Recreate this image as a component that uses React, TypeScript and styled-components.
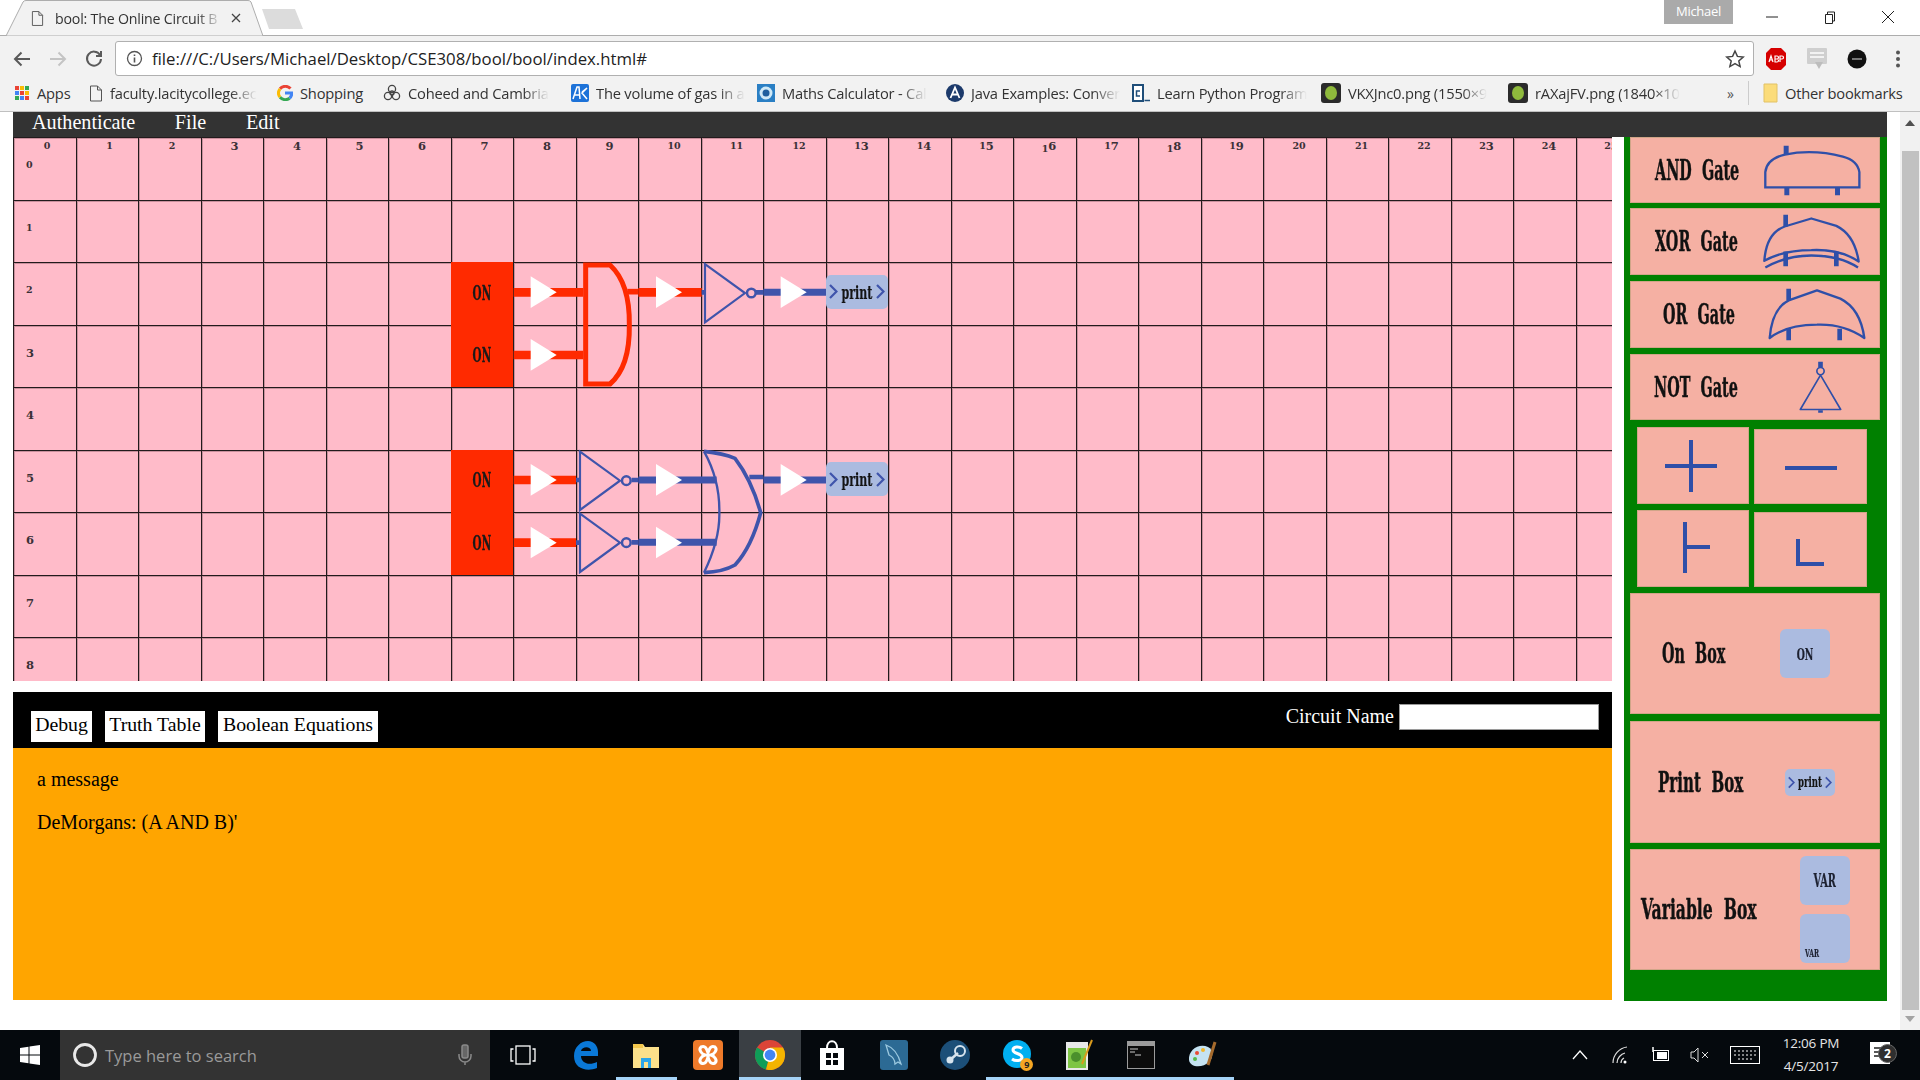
import React from 'react';
import styled, { createGlobalStyle } from 'styled-components';

const Global = createGlobalStyle`
  html, body { margin: 0; padding: 0; background: #fff; overflow: hidden; }
  #root { width: 1920px; height: 1080px; }
`;

const UI = `"Open Sans", "Noto Sans", sans-serif`;
const SERIF = `"Liberation Serif", serif`;
const SLAB = `"DejaVu Serif Condensed", "DejaVu Serif", serif`;
const PEACH = '#f5b0a3';
const BLUE = '#2f4fa8';
const WIRE_BLUE = '#3f54ab';
const RED = '#ff2a00';
const TAG = '#abbbe0';

const Screen = styled.div`
  width: 1920px; height: 1080px; display: flex; flex-direction: column; overflow: hidden;
`;

/* ---------- browser chrome ---------- */
const TabStrip = styled.div`
  height: 35px; background: #fff; border-bottom: 1px solid #adadad; display: flex; flex: none; position: relative;
`;
const Tab = styled.div`
  position: relative; width: 262px; height: 36px; margin-left: 5px; display: flex; align-items: center;
  padding: 0 0 0 26px; box-sizing: border-box; gap: 11px; z-index: 1;
`;
const TabShape = styled.svg`position: absolute; left: 0; top: 0; z-index: -1;`;
const TabTitle = styled.span`
  font: 14.2px ${UI}; color: #333; width: 167px; white-space: nowrap; letter-spacing: -0.2px; margin-right: -2px;
  mask-image: linear-gradient(to right, #000 85%, transparent);
`;
const NewTab = styled.svg`margin-top: 9px; margin-left: -6px; flex: none;`;
const UserBadge = styled.div`
  position: absolute; left: 1664px; top: 0; width: 69px; height: 24px; background: #aaa; color: #fff;
  font: 13px ${UI}; text-align: center; line-height: 22px; letter-spacing: -0.3px;
`;
const WindowButtons = styled.div`
  position: absolute; left: 1743px; top: 0; display: flex;
`;
const WindowButton = styled.div`
  width: 58px; height: 34px; display: flex; align-items: center; justify-content: center;
`;

const Toolbar = styled.div`
  height: 42px; background: #f2f2f2; display: flex; align-items: flex-start; padding-left: 4px; flex: none; box-sizing: border-box;
`;
const NavButton = styled.div`
  width: 36px; height: 36px; margin-top: 5px; display: flex; align-items: center; justify-content: center; flex: none;
`;
const Omnibox = styled.div`
  width: 1639px; height: 35px; margin: 5px 2px 0 3px; background: #fff; border: 1px solid #b0b0b0; border-radius: 3px; box-sizing: border-box;
  display: flex; align-items: center; padding: 0 8px 0 10px; flex: none;
`;
const Url = styled.span`
  font: 16.75px ${UI}; color: #222; margin-left: 9px; flex: 1; white-space: nowrap;
`;
const ExtensionSlot = styled.div`
  width: 40.6px; height: 36px; margin-top: 5px; display: flex; align-items: center; justify-content: center; flex: none;
`;

const Bookmarks = styled.div`
  height: 34px; background: #f2f2f2; border-bottom: 1px solid #c0c0c0; display: flex; align-items: center; box-sizing: border-box; flex: none; padding: 0 0 3px 14px;
`;
const Bookmark = styled.div<{ $w: number }>`
  width: ${p => p.$w}px; display: flex; align-items: center; gap: 7px; flex: none;
`;
const BookmarkIcon = styled.svg`flex: none;`;
const BookmarkText = styled.span<{ $fade?: boolean }>`
  font: 14.7px ${UI}; color: #333; white-space: nowrap; letter-spacing: -0.2px;
  ${p => p.$fade ? 'mask-image: linear-gradient(to right, #000 82%, transparent);' : ''}
`;
const Overflow = styled.span`font: 14px ${UI}; color: #555; width: 19px; text-align: center; flex: none;`;
const Divider = styled.div`width: 1px; height: 24px; background: #ccc; margin: 0 14px 0 8px; flex: none;`;

/* ---------- viewport & page ---------- */
const Viewport = styled.div`flex: 1; display: flex; min-height: 0;`;
const Page = styled.div`width: 1900px; padding-left: 13px; box-sizing: border-box; flex: none;`;
const MenuBar = styled.nav`
  width: 1874px; height: 25px; background: #333; display: flex; align-items: center; padding-left: 19px; box-sizing: border-box; gap: 39.700px;
`;
const MenuItem = styled.span`font: 20.2px/23px ${SERIF}; color: #fff; margin-top: -5px;`;
const Columns = styled.div`display: flex; gap: 12px; align-items: flex-start;`;
const Main = styled.div`width: 1599px; flex: none;`;

const Board = styled.div`
  position: relative; width: 1599px; height: 544px; overflow: hidden; background: #ffbbc9;
  display: grid; grid-template-columns: repeat(26, 62.5px); grid-auto-rows: 62.5px; z-index: 0;
`;
const Cell = styled.div<{ $on?: boolean }>`
  position: relative; display: flex; align-items: center; justify-content: center;
  background: ${p => p.$on ? RED : 'transparent'};
  ${p => p.$on ? '' : 'box-shadow: inset 1px 1px 0 #221a1c, inset 2px 2px 0 rgba(60,30,40,.28);'}
`;
const OnText = styled.span`
  font: bold 21px ${SLAB}; color: #1a1a1a; transform: scale(.55, 1); display: block; margin-top: -2px; -webkit-text-stroke: .3px #1a1a1a;
`;
const Digit = styled.span<{ $d: string }>`
  font-size: ${p => '012'.includes(p.$d) ? 9.5 : 11.5}px;
  vertical-align: ${p => '34579'.includes(p.$d) ? -1 : '68'.includes(p.$d) ? 2 : 0}px;
`;
const Axis = styled.span`
  position: absolute; font: bold 9px/12px "DejaVu Serif", serif; color: #3a3036; white-space: nowrap;
`;
const ColLabel = styled(Axis)<{ $wide: boolean }>`left: 0; width: ${p => p.$wide ? 72 : 68}px; text-align: center; top: 3px;`;
const RowLabel = styled(Axis)`left: 13px; top: 22px;`;
const Overlay = styled.svg`position: absolute; left: 0; top: 0; z-index: 1; pointer-events: none;`;

const PrintShell = styled.div<{ $small?: boolean }>`
  position: relative; z-index: 2; flex: none; background: ${TAG}; border-radius: 5px;
  width: ${p => p.$small ? 50 : 62}px; height: ${p => p.$small ? 27 : 34}px;
  margin-top: ${p => p.$small ? 0 : -3}px;
  display: flex; align-items: center; justify-content: space-between; padding: 0 3px; box-sizing: border-box;
`;
const PrintText = styled.span<{ $small?: boolean }>`
  font: bold ${p => p.$small ? 17 : 22}px/1 ${SLAB}; color: #141414; transform: scale(.56, .85); flex: none; width: 0; display: flex; justify-content: center; -webkit-text-stroke: .2px #141414;
`;

const PrintTag = ({ small }: { small?: boolean }) => {
  const w = small ? 7 : 9;
  const h = small ? 13 : 15;
  const chev = (
    <svg width={w} height={h} viewBox="0 0 9 15" fill="none">
      <path d="M1 1l6.500 6.500L1 14" stroke={WIRE_BLUE} strokeWidth="2.200" />
    </svg>
  );
  return (
    <PrintShell $small={small}>
      {chev}
      <PrintText $small={small}>print</PrintText>
      {chev}
    </PrintShell>
  );
};

const TabBar = styled.div`
  margin-top: 11px; height: 56px; background: #000; display: flex; align-items: flex-start; padding: 19px 13px 0 18px; box-sizing: border-box;
`;
const TabButton = styled.button<{ $w: number }>`
  width: ${p => p.$w}px; height: 31px; margin-right: 13px; border: 0; background: #fff; font: 19.8px/26px ${SERIF}; color: #000; padding: 0 0 7px; white-space: nowrap;
  &:last-of-type { margin-right: 0; }
`;
const NameField = styled.label`
  margin-left: auto; margin-top: -7px; display: flex; align-items: center; gap: 5px; color: #fff; font: 20px ${SERIF};
`;
const NameInput = styled.input`
  width: 200px; height: 26px; box-sizing: border-box; border: 1px solid #9a9a9a; background: #fff; margin: 0 0 -1px; padding: 0;
`;
const Output = styled.div`
  height: 252px; background: #ffa500; padding: 20px 20px 0 24px; box-sizing: border-box; font: 20px/22px ${SERIF}; color: #000;
`;
const OutputLine = styled.p`margin: 0 0 21px;`;

/* ---------- sidebar ---------- */
const Sidebar = styled.aside`
  width: 263px; height: 864px; background: #008000; padding: 0 7px 0 6px; box-sizing: border-box; flex: none;
`;
const PaletteItem = styled.div<{ $h: number; $gap?: number }>`
  height: ${p => p.$h}px; margin-bottom: ${p => p.$gap ?? 6}px; background: ${PEACH}; box-shadow: inset 0 0 0 1px #d0a588;
  display: flex; align-items: center; box-sizing: border-box;
`;
const LabelSlot = styled.div<{ $left: number }>`flex: 1; min-width: 0; padding-left: ${p => p.$left}px; height: 100%; display: flex; align-items: center;`;
const PaletteLabel = styled.span<{ $sx?: number }>`
  font: bold 31px/1 ${SLAB}; color: #111; white-space: pre; display: block; word-spacing: 10px; -webkit-text-stroke: .5px #111;
  transform: scale(${p => p.$sx ?? 0.515}, .9); transform-origin: left center;
`;
const GateIcon = styled.svg<{ $right: number }>`flex: none; margin-right: ${p => p.$right}px;`;
const ToolGrid = styled.div`
  display: grid; grid-template-columns: 112px 113px; column-gap: 5px; row-gap: 6px; padding-left: 7px; margin-bottom: 6px;
`;
const ToolButton = styled.div<{ $nudge?: number }>`
  height: ${p => 77 - (p.$nudge ?? 0)}px; margin-top: ${p => p.$nudge ?? 0}px;
  background: ${PEACH}; box-shadow: inset 0 0 0 1px #d0a588; display: flex; align-items: center; justify-content: center;
`;
const ChipStack = styled.div<{ $right: number }>`display: flex; flex-direction: column; gap: 9px; margin-right: ${p => p.$right}px; flex: none;`;
const Chip = styled.div<{ $corner?: boolean }>`
  width: 50px; height: 49px; background: ${TAG}; border-radius: 6px; display: flex; flex: none; position: relative;
  align-items: ${p => p.$corner ? 'flex-end' : 'center'}; justify-content: ${p => p.$corner ? 'flex-start' : 'center'};
`;
const ChipText = styled.span<{ $size: number; $corner?: boolean }>`
  font: bold ${p => p.$size}px/1 ${SLAB}; color: #1c2030; transform: scale(.52, .85); transform-origin: ${p => p.$corner ? 'left bottom' : 'center'};
  -webkit-text-stroke: .25px #1c2030;
  ${p => p.$corner ? 'margin: 0 0 4px 5px;' : ''}
`;

/* ---------- scrollbar ---------- */
const Scrollbar = styled.div`
  width: 20px; flex: none; background: #f1f1f1; display: flex; flex-direction: column; align-items: center; height: 100%;
`;
const ScrollArrow = styled.div`height: 39px; display: flex; align-items: center; justify-content: center; flex: none; padding-bottom: 17px; box-sizing: border-box;`;
const ScrollArrowDown = styled(ScrollArrow)`height: 18px; padding: 0; `;
const ScrollThumb = styled.div`width: 17px; height: 859px; background: #c1c1c1; flex: none;`;

/* ---------- taskbar ---------- */
const Taskbar = styled.footer`
  height: 50px; flex: none; background: #05090d; display: flex; align-items: stretch; color: #fff;
`;
const StartButton = styled.div`width: 60px; display: flex; align-items: center; justify-content: center; flex: none;`;
const SearchBox = styled.div`
  width: 430px; background: #333; display: flex; align-items: center; padding: 0 17px 0 12px; box-sizing: border-box; flex: none;
`;
const SearchText = styled.span`font: 16.5px ${UI}; color: #9a9a9a; margin-left: 7px; flex: 1;`;
const TaskIcons = styled.div`display: flex; padding-left: 2px;`;
const TaskSlot = styled.div<{ $open?: boolean; $active?: boolean }>`
  width: 61.8px; display: flex; align-items: center; justify-content: center; position: relative; flex: none;
  background: ${p => p.$active ? '#3a3f44' : 'transparent'};
  box-shadow: ${p => p.$open ? 'inset 0 -3px 0 #a5d3f7' : 'none'};
`;
const Tray = styled.div`margin-left: auto; display: flex; align-items: center; padding-right: 12px;`;
const TraySlot = styled.div<{ $w: number }>`width: ${p => p.$w}px; display: flex; align-items: center; justify-content: center; flex: none; position: relative;`;
const Clock = styled.div`font: 13.5px/23px ${UI}; color: #e6e6e6; text-align: center; letter-spacing: -0.2px; white-space: nowrap;`;
const NoteBadge = styled.span`
  position: absolute; left: 26px; top: 2px; width: 19px; height: 19px; border-radius: 50%; background: #2f2f2f; border: 1px solid #666;
  box-sizing: border-box; font: bold 12px/17px ${UI}; text-align: center; color: #fff;
`;
const SkypeBadge = styled.span`
  position: absolute; left: 34px; top: 28px; width: 13px; height: 13px; border-radius: 50%; background: #f5a623; color: #222;
  font: bold 9px/13px ${UI}; text-align: center;
`;

/* ---------- icons ---------- */
const FileIcon = () => (
  <BookmarkIcon width="14" height="17" viewBox="0 0 14 17" fill="none">
    <path d="M1.500 1h7l4 4v11h-11z M8.500 1v4h4" stroke="#555" strokeWidth="1" />
  </BookmarkIcon>
);
const AppsIcon = () => {
  const c = ['#ea4335', '#fbbc05', '#34a853', '#4285f4', '#ea4335', '#fbbc05', '#34a853', '#4285f4', '#ea4335'];
  return (
    <BookmarkIcon width="16" height="16" viewBox="0 0 16 16">
      {c.map((f, i) => <rect key={i} x={1 + (i % 3) * 5} y={1 + Math.floor(i / 3) * 5} width="4" height="4" fill={f} />)}
    </BookmarkIcon>
  );
};
const GoogleIcon = () => (
  <BookmarkIcon width="16" height="16" viewBox="0 0 16 16" fill="none" strokeWidth="3">
    <path d="M13.500 3.600A7 7 0 0 0 3 3.800" stroke="#ea4335" />
    <path d="M3 3.800a7 7 0 0 0 0 8.400" stroke="#fbbc05" />
    <path d="M3 12.200a7 7 0 0 0 9.600 1" stroke="#34a853" />
    <path d="M12.600 13.200A7 7 0 0 0 14.800 8H8" stroke="#4285f4" />
  </BookmarkIcon>
);
const KnotIcon = () => (
  <BookmarkIcon width="18" height="18" viewBox="0 0 18 18" fill="none" stroke="#444" strokeWidth="1.300">
    <circle cx="9" cy="5" r="3.600" /><circle cx="5" cy="12" r="3.600" /><circle cx="13" cy="12" r="3.600" /><circle cx="9" cy="9" r="2" />
  </BookmarkIcon>
);
const AeIcon = () => (
  <BookmarkIcon width="18" height="18" viewBox="0 0 18 18">
    <rect width="18" height="18" rx="2" fill="#1d72d8" />
    <path d="M2 15L6 3h2l1 12M3.600 11h5M11 8l5-4-5 5 5 6" fill="none" stroke="#fff" strokeWidth="1.500" />
  </BookmarkIcon>
);
const MathsIcon = () => (
  <BookmarkIcon width="18" height="18" viewBox="0 0 18 18">
    <rect width="18" height="18" fill="#2a7fc4" />
    <circle cx="9" cy="9" r="6.500" fill="#cfe9f7" /><circle cx="9" cy="9" r="3.500" fill="#1f5f9e" />
  </BookmarkIcon>
);
const JavaIcon = () => (
  <BookmarkIcon width="18" height="18" viewBox="0 0 18 18">
    <circle cx="9" cy="9" r="9" fill="#1c3a6b" />
    <path d="M4.500 14L9 3.500 13.500 14M6.500 10.500h5" fill="none" stroke="#fff" strokeWidth="1.800" />
  </BookmarkIcon>
);
const LearnIcon = () => (
  <BookmarkIcon width="18" height="18" viewBox="0 0 18 18" fill="none">
    <rect x="1" y="1" width="10" height="16" fill="#fff" stroke="#1f4e79" strokeWidth="2" />
    <path d="M8 7H4.500v5H8" stroke="#1f4e79" strokeWidth="1.500" />
    <path d="M12.500 16.500H18" stroke="#1f4e79" strokeWidth="1.500" />
  </BookmarkIcon>
);
const GreenIcon = () => (
  <BookmarkIcon width="20" height="20" viewBox="0 0 20 20">
    <rect width="20" height="20" rx="3" fill="#2b2b2b" />
    <ellipse cx="10" cy="10" rx="6" ry="7" fill="#8fba3c" />
  </BookmarkIcon>
);
const FolderIcon = () => (
  <BookmarkIcon width="15" height="20" viewBox="0 0 15 20">
    <path d="M1 1h13v18H1z" fill="#fbdc7a" stroke="#e2c266" />
  </BookmarkIcon>
);

const bookmarks: { w: number; text: string; icon: React.ReactNode; fade?: boolean }[] = [
  { w: 75, text: 'Apps', icon: <AppsIcon /> },
  { w: 188, text: 'faculty.lacitycollege.ec', icon: <FileIcon />, fade: true },
  { w: 106, text: 'Shopping', icon: <GoogleIcon /> },
  { w: 188, text: 'Coheed and Cambria', icon: <KnotIcon />, fade: true },
  { w: 186, text: 'The volume of gas in a', icon: <AeIcon />, fade: true },
  { w: 189, text: 'Maths Calculator - Cal', icon: <MathsIcon />, fade: true },
  { w: 186, text: 'Java Examples: Conver', icon: <JavaIcon />, fade: true },
  { w: 189, text: 'Learn Python Program', icon: <LearnIcon />, fade: true },
  { w: 187, text: 'VKXJnc0.png (1550×9', icon: <GreenIcon />, fade: true },
  { w: 213, text: 'rAXajFV.png (1840×10', icon: <GreenIcon />, fade: true },
];

const ChromeLogo = () => (
  <svg width="30" height="30" viewBox="0 0 30 30">
    <circle cx="15" cy="15" r="15" fill="#db4437" />
    <path d="M15 15L2 7.500A15 15 0 0 0 11 29.500z" fill="#0f9d58" />
    <path d="M15 15l-4 14.500A15 15 0 0 0 28 7.500H15z" fill="#f4b400" />
    <circle cx="15" cy="15" r="7" fill="#fff" /><circle cx="15" cy="15" r="5.400" fill="#4285f4" />
  </svg>
);
const taskIcons: { key: string; node: React.ReactNode; open?: boolean; active?: boolean }[] = [
  { key: 'view', node: (
    <svg width="26" height="26" viewBox="0 0 26 26" fill="none" stroke="#fff" strokeWidth="1.300">
      <rect x="6" y="4" width="14" height="18" /><path d="M3.500 7H1v12h2.500M22.500 7H25v12h-2.500" />
    </svg>) },
  { key: 'edge', node: (
    <svg width="28" height="30" viewBox="0 0 28 30" fill="none">
      <path d="M3 16C3 7 10 1 17 1c6 0 10 5 10 11v4H10c0 7 8 10 16 6v6c-10 4-23 1-23-12zM10 11h10c0-5-9-5-10 0z" fill="#0a78d7" />
    </svg>) },
  { key: 'files', open: true, node: (
    <svg width="28" height="28" viewBox="0 0 28 28">
      <path d="M1 3h10l2 3h14v21H1z" fill="#fbe08a" /><path d="M1 3h10v4H1z" fill="#f3c74c" />
      <path d="M9 27v-10h10v10h-3v-6h-4v6z" fill="#2ba6e8" /><path d="M12 21h4v6h-4z" fill="#fbe08a" />
    </svg>) },
  { key: 'xampp', node: (
    <svg width="30" height="30" viewBox="0 0 30 30" fill="none">
      <rect width="30" height="30" rx="4" fill="#ee7a2a" />
      <path d="M8 7c5-2 6 3 7 6 1-3 2-8 7-6 3 3-1 7-4 8 3 1 7 5 4 8-5 2-6-3-7-6-1 3-2 8-7 6-3-3 1-7 4-8-3-1-7-5-4-8z" stroke="#fff" strokeWidth="3" />
    </svg>) },
  { key: 'chrome', open: true, active: true, node: <ChromeLogo /> },
  { key: 'store', node: (
    <svg width="28" height="32" viewBox="0 0 28 32">
      <path d="M2 9h24v22H2z" fill="#fff" /><path d="M9 9c0-9 10-9 10 0" stroke="#fff" strokeWidth="2" fill="none" />
      <path d="M8 14h5v5H8zM15 14h5v5h-5zM8 21h5v5H8zM15 21h5v5h-5z" fill="#05090d" />
    </svg>) },
  { key: 'mysql', node: (
    <svg width="28" height="30" viewBox="0 0 28 30">
      <rect width="28" height="30" rx="3" fill="#2c6a94" />
      <path d="M6 5c6 2 12 8 15 19l-3-2-3 2c0-5-4-8-6-9z" fill="none" stroke="#9cc9e0" strokeWidth="1.300" />
    </svg>) },
  { key: 'steam', node: (
    <svg width="30" height="30" viewBox="0 0 30 30">
      <circle cx="15" cy="15" r="15" fill="#1c4f78" />
      <circle cx="20" cy="11" r="5" fill="none" stroke="#d7e4ee" strokeWidth="2" /><circle cx="10" cy="20" r="3.500" fill="#d7e4ee" />
      <path d="M10 20l8-7" stroke="#d7e4ee" strokeWidth="2.500" />
    </svg>) },
  { key: 'skype', open: true, node: (
    <>
      <svg width="30" height="32" viewBox="0 0 30 32">
        <circle cx="15" cy="15" r="14" fill="#00aff0" />
        <path d="M20 9.500c-3-2.500-9-2-9 1.500 0 4 9 3 9 7.500 0 3.500-6.500 4-10 1.500" fill="none" stroke="#fff" strokeWidth="3" />
      </svg>
      <SkypeBadge>9</SkypeBadge>
    </>) },
  { key: 'notepad', open: true, node: (
    <svg width="30" height="32" viewBox="0 0 30 32">
      <path d="M2 3h22v28H2z" fill="#e8e8e8" /><path d="M4 9h18v20H4z" fill="#7ec544" />
      <path d="M18 25L28 1" stroke="#d99a1c" strokeWidth="2" /><circle cx="12" cy="18" r="5" fill="#4b8f2c" />
    </svg>) },
  { key: 'cmd', open: true, node: (
    <svg width="28" height="28" viewBox="0 0 28 28">
      <rect width="28" height="28" fill="#9b9b9b" /><rect x="1" y="5" width="26" height="22" fill="#0c0c0c" />
      <path d="M3 8h8M3 11h5M8 14h6" stroke="#ccc" strokeWidth="1" />
    </svg>) },
  { key: 'paint', open: true, node: (
    <svg width="30" height="32" viewBox="0 0 30 32">
      <path d="M1 21C0 11 11 4 20 8c6 3 5 11 1 15-6 6-19 6-20-2z" fill="#c5e3f2" />
      <circle cx="9" cy="14" r="2" fill="#e94b35" /><circle cx="15" cy="11" r="2" fill="#f3b82f" /><circle cx="7" cy="20" r="2" fill="#57b947" />
      <path d="M20 26L27 3" stroke="#a56a2c" strokeWidth="3" />
    </svg>) },
];

/* ---------- gates in the palette (drawn in 3x coordinates) ---------- */
const PaletteAnd = () => (
  <GateIcon $right={17} width="100" height="53" viewBox="460 40 300 160" fill="none" stroke={BLUE}>
    <path d="M466 171H750V125Q745 90 700 78Q610 55 525 72Q470 85 466 125Z" strokeWidth="7" />
    <path d="M529 45V70M531 172V195M684 172V195" strokeWidth="15" />
  </GateIcon>
);
const PaletteXor = () => (
  <GateIcon $right={17} width="100" height="57" viewBox="460 245 300 170" fill="none" stroke={BLUE}>
    <path d="M464 388Q470 305 525 285L605 261L680 283Q735 310 747 390Q690 352 605 356Q520 356 464 388Z" strokeWidth="7" strokeLinejoin="round" />
    <path d="M467 408Q530 372 605 372Q690 372 745 408" strokeWidth="7" />
    <path d="M528 250V285M528 360V404M680 360V404" strokeWidth="14" />
  </GateIcon>
);
const PaletteOr = () => (
  <GateIcon $right={13} width="100" height="55" viewBox="470 465 300 165" fill="none" stroke={BLUE}>
    <path d="M478 618Q485 530 535 505L620 475L690 500Q750 530 762 618Q700 575 620 578Q530 578 478 618Z" strokeWidth="7" strokeLinejoin="round" />
    <path d="M535 470V505M535 590V625M688 590V625" strokeWidth="14" />
  </GateIcon>
);
const PaletteNot = () => (
  <GateIcon $right={35} width="48" height="55" viewBox="560 685 145 165" fill="none" stroke={BLUE}>
    <path d="M570 834H692L631 730Z" strokeWidth="5" strokeLinejoin="round" />
    <circle cx="631" cy="718" r="11" strokeWidth="5" />
    <path d="M631 690V707M631 836V844" strokeWidth="14" />
  </GateIcon>
);
const ToolIcon = ({ d }: { d: string }) => (
  <svg width="60" height="60" viewBox="0 0 60 60" fill="none" stroke={BLUE} strokeWidth="4">
    <path d={d} />
  </svg>
);

const arrows: [number, number][] = [
  [302, 157], [678, 157], [1052, 157], [302, 345],
  [302, 720], [678, 720], [1052, 720], [302, 908], [678, 908],
];
const notGates: [number, number][] = [[825, 159], [450, 722], [450, 908]];

const Circuit = () => (
  <Overlay width="1599" height="544" viewBox="13 137 1599 544">
    <g transform="translate(430 240) scale(.33333)" fill="none">
      <g stroke={RED} strokeWidth="26">
        <path d="M251 157H460M251 345H460M625 157H815M251 720H438M251 908H438" />
      </g>
      <path d="M592 155H625" stroke={RED} strokeWidth="17" />
      <path d="M467 75H540Q600 130 598 255Q600 380 540 432H467Z" stroke={RED} strokeWidth="15" />
      <g stroke={WIRE_BLUE} strokeWidth="21">
        <path d="M1000 157H1188M625 720H860M625 907H860M1000 720H1188" />
      </g>
      <g stroke={WIRE_BLUE} strokeWidth="14">
        <path d="M978 157H1000M605 720H625M605 907H625M958 711H1000M815 157H825M438 720H450M438 908H450" />
      </g>
      {notGates.map(([x, y]) => (
        <g key={`${x}-${y}`} stroke={WIRE_BLUE} strokeWidth="6.500">
          <path d={`M${x} ${y - 87}V${y + 88}L${x + 120} ${y}Z`} />
          <circle cx={x + 139} cy={y} r="13" strokeWidth="7.500" />
        </g>
      ))}
      <path d="M822 634Q880 640 915 655Q965 720 992 818Q965 920 915 975Q880 995 822 998" stroke={WIRE_BLUE} strokeWidth="11" strokeLinejoin="round" />
      <path d="M822 998Q870 900 868 818Q870 720 822 634" stroke={WIRE_BLUE} strokeWidth="7" />
      {arrows.map(([x, y]) => (
        <path key={`${x}-${y}`} d={`M${x} ${y - 48}L${x + 78} ${y}L${x} ${y + 47}Z`} fill="#fff" />
      ))}
    </g>
  </Overlay>
);

const Digits = ({ n }: { n: number }) => (
  <>{String(n).split('').map((d, i) => <Digit key={i} $d={d}>{d}</Digit>)}</>
);

const onCells = new Set(['2-7', '3-7', '5-7', '6-7']);
const printCells = new Set(['2-13', '5-13']);
const ROWS = Array.from({ length: 9 }, (_, i) => i);
const COLS = Array.from({ length: 26 }, (_, i) => i);

export default function App() {
  return (
    <Screen>
      <Global />
      <TabStrip>
        <Tab>
          <TabShape width="262" height="36" viewBox="0 0 262 36">
            <path d="M1 36L18 2Q19 .5 21 .5H243Q245 .5 246 2L258 36Z" fill="#f2f2f2" stroke="#adadad" />
          </TabShape>
          <svg width="13" height="17" viewBox="0 0 14 17" fill="none">
            <path d="M1.500 1h7l4 4v11h-11z M8.500 1v4h4" stroke="#555" strokeWidth="1" />
          </svg>
          <TabTitle>bool: The Online Circuit B</TabTitle>
          <svg width="10" height="10" viewBox="0 0 10 10" stroke="#444" strokeWidth="1.300"><path d="M1 1l8 8M9 1l-8 8" /></svg>
        </Tab>
        <NewTab width="43" height="21" viewBox="0 0 43 21"><path d="M1 0H34L42 20H8Z" fill="#dcdcdc" /></NewTab>
        <UserBadge>Michael</UserBadge>
        <WindowButtons>
          <WindowButton><svg width="12" height="2"><path d="M0 1h12" stroke="#222" /></svg></WindowButton>
          <WindowButton><svg width="12" height="13" fill="none" stroke="#222"><path d="M1.500 3.500h7v9h-7zM3.500 3.500V1h7v9H8.500" /></svg></WindowButton>
          <WindowButton><svg width="14" height="14" stroke="#222"><path d="M1 1l12 12M13 1L1 13" /></svg></WindowButton>
        </WindowButtons>
      </TabStrip>

      <Toolbar>
        <NavButton>
          <svg width="18" height="16" viewBox="0 0 18 16" fill="none" stroke="#5a5a5a" strokeWidth="2"><path d="M17 8H2M8.500 1.500L2 8l6.500 6.500" /></svg>
        </NavButton>
        <NavButton>
          <svg width="18" height="16" viewBox="0 0 18 16" fill="none" stroke="#c4c4c4" strokeWidth="2"><path d="M1 8h15M9.500 1.500L16 8l-6.500 6.500" /></svg>
        </NavButton>
        <NavButton>
          <svg width="18" height="18" viewBox="0 0 18 18" fill="none" stroke="#5a5a5a" strokeWidth="2"><path d="M15 5A7 7 0 1 0 16 9" /><path d="M16 1v5h-5" /></svg>
        </NavButton>
        <Omnibox>
          <svg width="17" height="17" viewBox="0 0 17 17" fill="none" stroke="#555"><circle cx="8.500" cy="8.500" r="7" strokeWidth="1.300" /><path d="M8.500 7.500v5M8.500 4.500v1.500" strokeWidth="1.600" /></svg>
          <Url>file:///C:/Users/Michael/Desktop/CSE308/bool/bool/index.html#</Url>
          <svg width="20" height="20" viewBox="0 0 20 20" fill="none" stroke="#444" strokeWidth="1.500"><path d="M10 2l2.400 5.400 5.800.6-4.400 3.900 1.300 5.700L10 14.700l-5.100 2.900 1.300-5.700L1.800 8l5.800-.6z" /></svg>
        </Omnibox>
        <ExtensionSlot>
          <svg width="22" height="24" viewBox="0 0 22 24"><path d="M6 1h10l5 5v12l-5 5H6l-5-5V6z" fill="#d60000" /><path d="M4 15l2-6 2 6M5 13h2M10 9v6h2a1.500 1.500 0 0 0 0-3h-2 2a1.500 1.500 0 0 0 0-3zM15 15V9h2a1.500 1.500 0 0 1 0 3h-2" fill="none" stroke="#fff" strokeWidth="1.200" /></svg>
        </ExtensionSlot>
        <ExtensionSlot>
          <svg width="20" height="24" viewBox="0 0 20 24"><rect y="1" width="20" height="16" rx="1" fill="#cfcfcf" /><path d="M3 6h14M3 10h14" stroke="#f2f2f2" strokeWidth="2" /><path d="M8 15l4 7 4-7z" fill="#bdbdbd" /></svg>
        </ExtensionSlot>
        <ExtensionSlot>
          <svg width="20" height="20" viewBox="0 0 20 20"><circle cx="10" cy="10" r="9.500" fill="#111" /><path d="M5 10h10" stroke="#777" strokeWidth="2" /></svg>
        </ExtensionSlot>
        <ExtensionSlot>
          <svg width="6" height="18" viewBox="0 0 6 18" fill="#555"><circle cx="3" cy="2.500" r="2" /><circle cx="3" cy="9" r="2" /><circle cx="3" cy="15.500" r="2" /></svg>
        </ExtensionSlot>
      </Toolbar>

      <Bookmarks>
        {bookmarks.map(b => (
          <Bookmark key={b.text} $w={b.w}>
            {b.icon}
            <BookmarkText $fade={b.fade}>{b.text}</BookmarkText>
          </Bookmark>
        ))}
        <Overflow>»</Overflow>
        <Divider />
        <Bookmark $w={150}>
          <FolderIcon />
          <BookmarkText>Other bookmarks</BookmarkText>
        </Bookmark>
      </Bookmarks>

      <Viewport>
        <Page>
          <MenuBar>
            <MenuItem>Authenticate</MenuItem>
            <MenuItem>File</MenuItem>
            <MenuItem>Edit</MenuItem>
          </MenuBar>
          <Columns>
            <Main>
              <Board>
                {ROWS.map(r => COLS.map(c => {
                  const key = `${r}-${c}`;
                  return (
                    <Cell key={key} $on={onCells.has(key)}>
                      {r === 0 && <ColLabel $wide={c > 9}><Digits n={c} /></ColLabel>}
                      {c === 0 && <RowLabel><Digits n={r} /></RowLabel>}
                      {onCells.has(key) && <OnText>ON</OnText>}
                      {printCells.has(key) && <PrintTag />}
                    </Cell>
                  );
                }))}
                <Circuit />
              </Board>
              <TabBar>
                <TabButton $w={61}>Debug</TabButton>
                <TabButton $w={100}>Truth Table</TabButton>
                <TabButton $w={160}>Boolean Equations</TabButton>
                <NameField>Circuit Name <NameInput type="text" /></NameField>
              </TabBar>
              <Output>
                <OutputLine>a message</OutputLine>
                <OutputLine>DeMorgans: (A AND B)'</OutputLine>
              </Output>
            </Main>
            <Sidebar>
              <PaletteItem $h={66} $gap={5}>
                <LabelSlot $left={25}><PaletteLabel>AND Gate</PaletteLabel></LabelSlot>
                <PaletteAnd />
              </PaletteItem>
              <PaletteItem $h={67}>
                <LabelSlot $left={25}><PaletteLabel>XOR Gate</PaletteLabel></LabelSlot>
                <PaletteXor />
              </PaletteItem>
              <PaletteItem $h={67}>
                <LabelSlot $left={33}><PaletteLabel>OR Gate</PaletteLabel></LabelSlot>
                <PaletteOr />
              </PaletteItem>
              <PaletteItem $h={66} $gap={7}>
                <LabelSlot $left={24}><PaletteLabel>NOT Gate</PaletteLabel></LabelSlot>
                <PaletteNot />
              </PaletteItem>
              <ToolGrid>
                <ToolButton><ToolIcon d="M28 4V56M2 30H54" /></ToolButton>
                <ToolButton $nudge={2}><ToolIcon d="M4 31H56" /></ToolButton>
                <ToolButton><ToolIcon d="M22 3V54M22 28H47" /></ToolButton>
                <ToolButton $nudge={2}><ToolIcon d="M17 19V44H43" /></ToolButton>
              </ToolGrid>
              <PaletteItem $h={121} $gap={7}>
                <LabelSlot $left={32}><PaletteLabel>On Box</PaletteLabel></LabelSlot>
                <ChipStack $right={50}>
                  <Chip><ChipText $size={20}>ON</ChipText></Chip>
                </ChipStack>
              </PaletteItem>
              <PaletteItem $h={122}>
                <LabelSlot $left={28}><PaletteLabel $sx={0.54}>Print Box</PaletteLabel></LabelSlot>
                <ChipStack $right={45}>
                  <PrintTag small />
                </ChipStack>
              </PaletteItem>
              <PaletteItem $h={121}>
                <LabelSlot $left={11}><PaletteLabel $sx={0.56}>Variable Box</PaletteLabel></LabelSlot>
                <ChipStack $right={30}>
                  <Chip><ChipText $size={21}>VAR</ChipText></Chip>
                  <Chip $corner><ChipText $size={13} $corner>VAR</ChipText></Chip>
                </ChipStack>
              </PaletteItem>
            </Sidebar>
          </Columns>
        </Page>
        <Scrollbar>
          <ScrollArrow>
            <svg width="10" height="6"><path d="M5 0l5 6H0z" fill="#505050" /></svg>
          </ScrollArrow>
          <ScrollThumb />
          <ScrollArrowDown>
            <svg width="10" height="6"><path d="M0 0h10L5 6z" fill="#a3a3a3" /></svg>
          </ScrollArrowDown>
        </Scrollbar>
      </Viewport>

      <Taskbar>
        <StartButton>
          <svg width="20" height="20" viewBox="0 0 20 20" fill="#fff"><path d="M0 3l8.500-1.200V9.500H0zM9.500 1.600L20 0v9.500H9.500zM0 10.500h8.500v7.700L0 17zM9.500 10.500H20V20L9.500 18.400z" /></svg>
        </StartButton>
        <SearchBox>
          <svg width="26" height="26" viewBox="0 0 26 26" fill="none" stroke="#e8e8e8" strokeWidth="2.800"><circle cx="13" cy="13" r="10.500" /></svg>
          <SearchText>Type here to search</SearchText>
          <svg width="16" height="22" viewBox="0 0 16 22" fill="none" stroke="#8a8a8a" strokeWidth="1.500"><rect x="5" y="1" width="6" height="13" rx="2" fill="#666" /><path d="M2 10v2a6 6 0 0 0 12 0v-2M8 18v3" /></svg>
        </SearchBox>
        <TaskIcons>
          {taskIcons.map(t => (
            <TaskSlot key={t.key} $open={t.open} $active={t.active}>{t.node}</TaskSlot>
          ))}
        </TaskIcons>
        <Tray>
          <TraySlot $w={40}><svg width="16" height="10" viewBox="0 0 16 10" fill="none" stroke="#fff" strokeWidth="1.300"><path d="M1 9l7-8 7 8" /></svg></TraySlot>
          <TraySlot $w={40}><svg width="16" height="18" viewBox="0 0 16 18" fill="none" stroke="#ddd" strokeWidth="1.200"><path d="M1 17C1 9 7 2 15 1M5 17c0-5 4-9 8-10M9 17c0-2 1-4 3-5" /><circle cx="13" cy="16" r="1.500" fill="#fff" stroke="none" /></svg></TraySlot>
          <TraySlot $w={40}><svg width="20" height="16" viewBox="0 0 20 16" fill="none" stroke="#fff"><rect x="3.500" y="3.500" width="15" height="10" /><rect x="7" y="5" width="10" height="7" fill="#fff" stroke="none" /><path d="M3 0v5" strokeWidth="1.500" /></svg></TraySlot>
          <TraySlot $w={40}><svg width="20" height="18" viewBox="0 0 20 18" fill="none" stroke="#ddd"><path d="M1 6h3l4-4v14l-4-4H1zM12 6l6 6M18 6l-6 6" /></svg></TraySlot>
          <TraySlot $w={50}><svg width="30" height="18" viewBox="0 0 30 18" fill="none" stroke="#fff"><rect x=".5" y=".5" width="29" height="17" /><path d="M4 5h22M4 9h22M8 13h14" strokeDasharray="2 2" /></svg></TraySlot>
          <TraySlot $w={82}><Clock>12:06 PM<br />4/5/2017</Clock></TraySlot>
          <TraySlot $w={56}>
            <svg width="20" height="26" viewBox="0 0 20 26" fill="#fff"><path d="M0 0h20v22H0z" /><path d="M4 6h12M4 10h12M4 14h12" stroke="#222" strokeWidth="1.500" /></svg>
            <NoteBadge>2</NoteBadge>
          </TraySlot>
        </Tray>
      </Taskbar>
    </Screen>
  );
}
